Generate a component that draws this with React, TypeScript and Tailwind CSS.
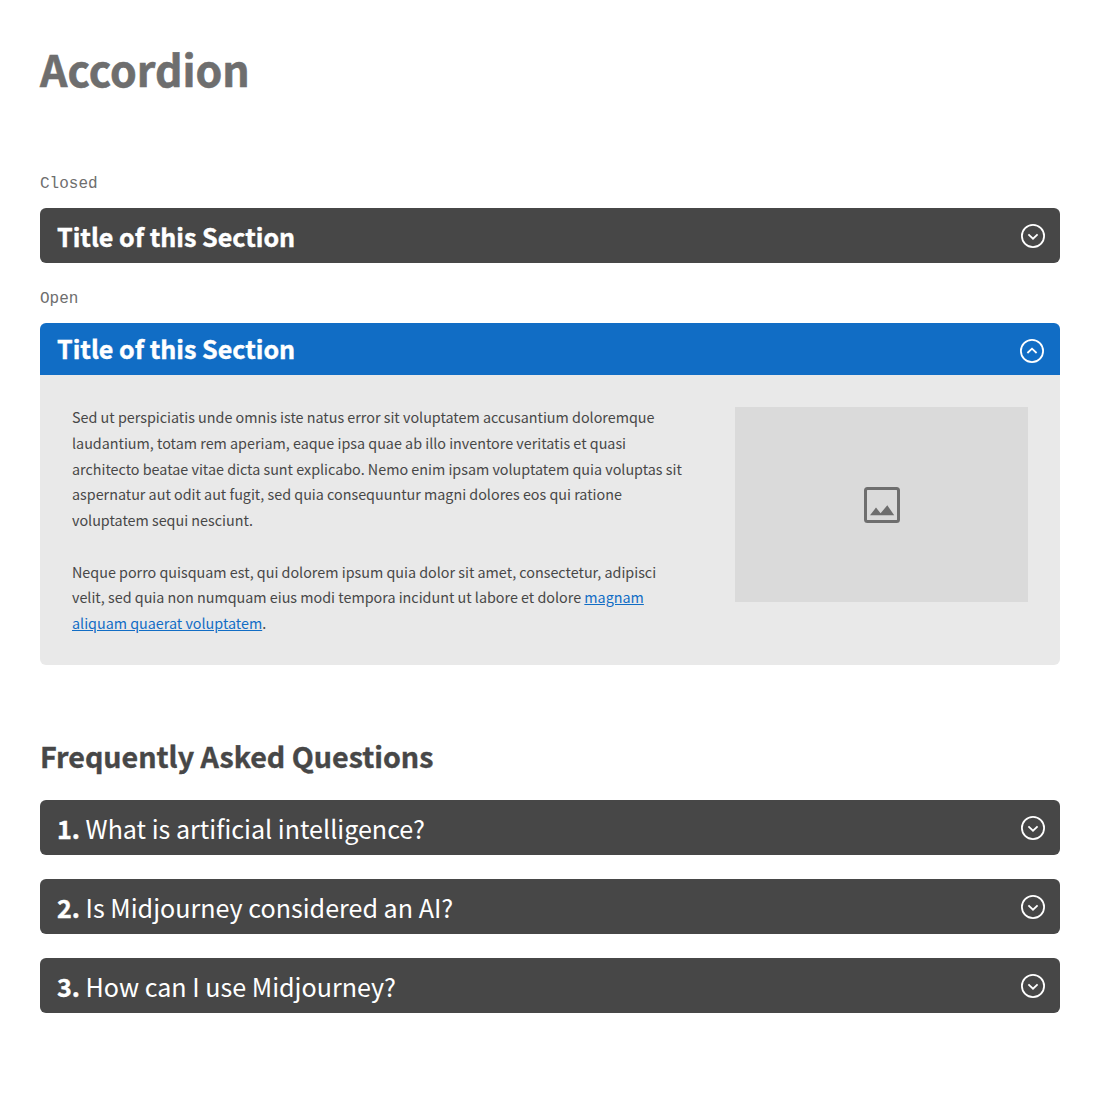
import React, { useState } from "react";

function Toggle({ open = false }: { open?: boolean }) {
  return (
    <svg className="shrink-0" width="24" height="24" viewBox="0 0 24 24" fill="none" stroke="#fff">
      <circle cx="12" cy="12" r="11.1" strokeWidth="1.8" />
      <path
        d={open ? "M7.4 14 12 9.7 16.6 14" : "M7.4 10.3 12 14.7 16.6 10.3"}
        strokeWidth="1.8"
      />
    </svg>
  );
}

function PictureIcon() {
  return (
    <svg width="36" height="36" viewBox="0 0 36 36" fill="none">
      <rect x="1.5" y="1.5" width="33" height="33" rx="2" stroke="#6e6e6e" strokeWidth="3" />
      <path d="M6 28.2 12 20.6 16.6 26.2 23.3 18.3 30.2 28.2Z" fill="#6e6e6e" />
    </svg>
  );
}

function Label({ children }: { children: React.ReactNode }) {
  return (
    <p className="text-base leading-6 text-[#6e6e6e] font-['Liberation_Mono',monospace]">{children}</p>
  );
}

function Section({
  title,
  number,
  children,
  defaultOpen = false,
}: {
  title: string;
  number?: number;
  children?: React.ReactNode;
  defaultOpen?: boolean;
}) {
  const [open, setOpen] = useState(defaultOpen);
  return (
    <section>
      <button
        type="button"
        aria-expanded={open}
        onClick={() => setOpen(!open)}
        className={
          open
            ? "flex h-[52px] w-full items-center justify-between rounded-t-md bg-[#116dc5] pr-4 pl-[17px] text-left text-white"
            : "flex h-[55px] w-full items-center justify-between rounded-md bg-[#474747] pr-[15px] pl-[17px] text-left text-white"
        }
      >
        <span className={open ? "pb-0.5 text-[25.1px] leading-9 font-bold" : "pt-px text-[25.1px] leading-9"}>
          {number ? (
            <>
              <b className="font-bold [-webkit-text-stroke:0.4px]">{number}.</b> {title}
            </>
          ) : (
            <span className="font-bold [-webkit-text-stroke:0.4px]">{title}</span>
          )}
        </span>
        <span className={open ? "pt-1" : "pt-px"}>
          <Toggle open={open} />
        </span>
      </button>
      {open && children}
    </section>
  );
}

const questions = [
  "What is artificial intelligence?",
  "Is Midjourney considered an AI?",
  "How can I use Midjourney?",
];

export default function App() {
  return (
    <main className="min-h-[1118px] bg-white px-10 pt-[38px] text-[#474747] font-['Noto_Sans_CJK_SC',sans-serif]">
      <h1 className="text-[42.8px] leading-[60px] font-bold text-[#6e6e6e] [-webkit-text-stroke:0.6px]">Accordion</h1>

      <div className="mt-[74px]">
        <Label>Closed</Label>
        <div className="mt-3">
          <Section title="Title of this Section" />
        </div>
      </div>

      <div className="mt-6">
        <Label>Open</Label>
        <div className="mt-3">
          <Section title="Title of this Section" defaultOpen>
            <div className="flex h-[290px] justify-between rounded-b-md bg-[#e9e9e9] p-8">
              <div className="-mt-[2.7px] w-[620px] text-[14.33px] leading-[25.7px]">
                <p>
                  Sed ut perspiciatis unde omnis iste natus error sit voluptatem accusantium doloremque
                  <br />
                  laudantium, totam rem aperiam, eaque ipsa quae ab illo inventore veritatis et quasi
                  <br />
                  architecto beatae vitae dicta sunt explicabo. Nemo enim ipsam voluptatem quia voluptas sit
                  <br />
                  aspernatur aut odit aut fugit, sed quia consequuntur magni dolores eos qui ratione
                  <br />
                  voluptatem sequi nesciunt.
                </p>
                <p className="mt-[25.7px]">
                  Neque porro quisquam est, qui dolorem ipsum quia dolor sit amet, consectetur, adipisci
                  <br />
                  velit, sed quia non numquam eius modi tempora incidunt ut labore et dolore{" "}
                  <a href="#" className="text-[#116dc5] underline">
                    magnam
                    <br />
                    aliquam quaerat voluptatem
                  </a>
                  .
                </p>
              </div>
              <div className="flex h-[195px] w-[293px] items-center justify-center bg-[#dadada]">
                <PictureIcon />
              </div>
            </div>
          </Section>
        </div>
      </div>

      <h2 className="mt-[71px] text-[28.65px] leading-10 font-bold [-webkit-text-stroke:0.4px]">
        Frequently Asked Questions
      </h2>
      <div className="mt-6 flex flex-col gap-6">
        {questions.map((q, i) => (
          <Section key={q} number={i + 1} title={q} />
        ))}
      </div>
    </main>
  );
}
